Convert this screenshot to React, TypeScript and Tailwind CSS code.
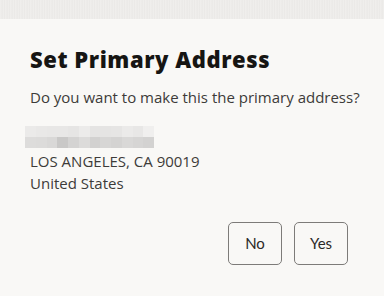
import React from "react";

export default function App() {
  return (
    <div className="w-[384px] h-[296px] bg-[#f9f8f6] flex flex-col overflow-hidden">
      <div className="h-[19px] w-full bg-[#ebe9e7] bg-[repeating-linear-gradient(90deg,#ebe9e7_0px,#f4f3f1_1px,#e6e4e2_2px,#f1f0ee_3px,#e9e7e5_5px)]" />
      <div className="flex flex-col pl-[30px] pr-[22px] font-['Open_Sans',sans-serif]">
        <h1 className="mt-[27px] text-[22px] leading-[26px] font-extrabold text-[#161513] tracking-[0.55px]">
          Set Primary Address
        </h1>
        <p className="mt-[15px] text-[15px] leading-[20px] text-[#3d3b39]">
          Do you want to make this the primary address?
        </p>
        <div className="mt-[19px] -ml-[5px] w-[129px] h-[22px] grid grid-cols-12 grid-rows-2">
          <div className="bg-[#ebeae9]" />
          <div className="bg-[#e9e8e7]" />
          <div className="bg-[#e8e7e6]" />
          <div className="bg-[#e8e7e6]" />
          <div className="bg-[#e6e5e4]" />
          <div className="bg-[#ecebea]" />
          <div className="bg-[#e5e4e3]" />
          <div className="bg-[#e5e4e3]" />
          <div className="bg-[#e6e5e4]" />
          <div className="bg-[#ebeae9]" />
          <div className="bg-[#e8e7e6]" />
          <div className="bg-[#f0efee]" />
          <div className="bg-[#dddcdb]" />
          <div className="bg-[#dcdbda]" />
          <div className="bg-[#d9d8d7]" />
          <div className="bg-[#c9c8c7]" />
          <div className="bg-[#d4d3d2]" />
          <div className="bg-[#dcdbda]" />
          <div className="bg-[#d2d1d0]" />
          <div className="bg-[#d7d6d5]" />
          <div className="bg-[#d4d3d2]" />
          <div className="bg-[#d9d8d7]" />
          <div className="bg-[#d6d5d4]" />
          <div className="bg-[#d3d2d1]" />
        </div>
        <div className="mt-[2px] text-[15px] leading-[22px] text-[#3d3b39]">
          <div>LOS ANGELES, CA 90019</div>
          <div>United States</div>
        </div>
        <div className="mt-[28px] flex justify-end gap-[12px] pr-[14px] font-['Lato',sans-serif]">
          <button className="w-[54px] h-[43px] rounded-[5px] border border-[#7d7b79] text-[15px] text-[#2b2927]">
            No
          </button>
          <button className="w-[54px] h-[43px] rounded-[5px] border border-[#7d7b79] text-[15px] text-[#2b2927]">
            Yes
          </button>
        </div>
      </div>
    </div>
  );
}
